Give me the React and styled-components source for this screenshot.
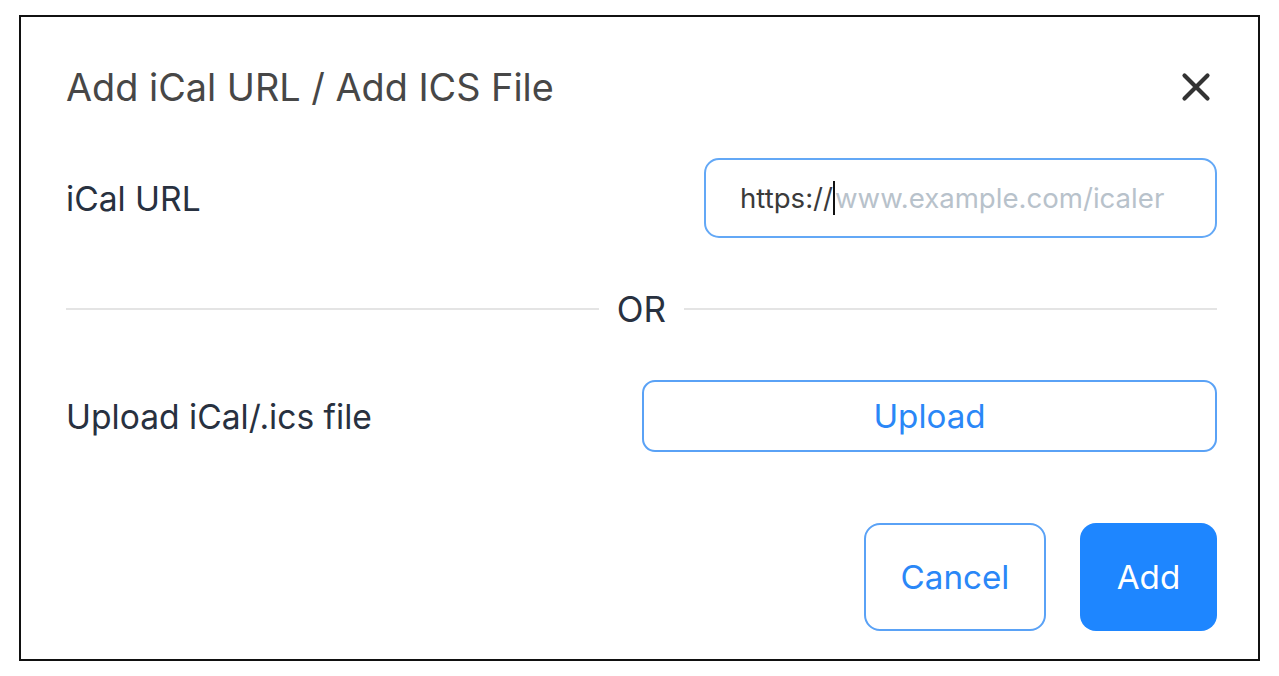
import React from "react";
import styled, { createGlobalStyle } from "styled-components";

const Global = createGlobalStyle`
  html, body { margin: 0; padding: 0; background: #ffffff; }
  body { font-family: Inter, "Liberation Sans", Arial, sans-serif; }
  * { box-sizing: border-box; }
`;

const Page = styled.div`
  padding: 15px 0 0 19px;
  width: 1279px;
  height: 676px;
`;

const Frame = styled.div`
  width: 1241px;
  height: 646px;
  border: 2px solid #111111;
  background: #ffffff;
  padding: 48px 41px 28px 45px;
  display: flex;
  flex-direction: column;
`;

const Header = styled.div`
  height: 44px;
  display: flex;
  align-items: center;
  justify-content: space-between;
`;

const Title = styled.h2`
  margin: 0;
  font-size: 37.8px;
  font-weight: 400;
  color: #474747;
  letter-spacing: 0;
`;

const CloseButton = styled.button`
  border: none;
  background: none;
  padding: 0;
  width: 32px;
  height: 32px;
  margin-right: 5px;
  display: flex;
  align-items: center;
  justify-content: center;
  cursor: pointer;
`;

const Row = styled.div`
  display: flex;
  align-items: center;
  justify-content: space-between;
  margin-top: ${(p) => p.$gap}px;
`;

const Label = styled.label`
  font-size: 33.6px;
  color: #283140;
`;

const FakeInput = styled.div`
  width: 513px;
  height: 80px;
  border: 2px solid #63a8f6;
  border-radius: 15px;
  padding: 0 34px;
  display: flex;
  align-items: center;
  font-size: 27.6px;
  white-space: nowrap;
  overflow: hidden;
`;

const Typed = styled.span`
  color: #3a3a3a;
`;

const Caret = styled.span`
  display: inline-block;
  width: 2px;
  height: 34px;
  background: #111111;
`;

const Placeholder = styled.span`
  color: #b8c2cb;
`;

const Divider = styled.div`
  margin-top: 51px;
  height: 40px;
  display: flex;
  align-items: center;
  gap: 18px;
`;

const Line = styled.div`
  flex: 1;
  height: 2px;
  background: #e4e4e4;
`;

const OrText = styled.span`
  font-size: 35px;
  color: #283140;
`;

const OutlineButton = styled.button`
  width: ${(p) => p.$w}px;
  height: ${(p) => p.$h}px;
  border: 2px solid #5aa2f6;
  border-radius: ${(p) => p.$r}px;
  background: #ffffff;
  color: #2a87f7;
  font-family: inherit;
  font-size: 33.2px;
  cursor: pointer;
`;

const PrimaryButton = styled.button`
  width: 137px;
  height: 108px;
  border: none;
  border-radius: 16px;
  background: #1e86ff;
  color: #ffffff;
  font-family: inherit;
  font-size: 33.2px;
  cursor: pointer;
`;

const Footer = styled.div`
  margin-top: 71px;
  display: flex;
  justify-content: flex-end;
  gap: 34px;
`;

export default function App() {
  return (
    <>
      <Global />
      <Page>
        <Frame>
          <Header>
            <Title>Add iCal URL / Add ICS File</Title>
            <CloseButton aria-label="Close">
              <svg width="30" height="30" viewBox="0 0 30 30">
                <path
                  d="M3.5 3.5 L26.5 26.5 M26.5 3.5 L3.5 26.5"
                  stroke="#333333"
                  strokeWidth="4.2"
                  strokeLinecap="round"
                />
              </svg>
            </CloseButton>
          </Header>
          <Row $gap={49}>
            <Label>iCal URL</Label>
            <FakeInput>
              <Typed>https://</Typed>
              <Caret />
              <Placeholder>www.example.com/icaler</Placeholder>
            </FakeInput>
          </Row>
          <Divider>
            <Line />
            <OrText>OR</OrText>
            <Line />
          </Divider>
          <Row $gap={51}>
            <Label>Upload iCal/.ics file</Label>
            <OutlineButton $w={575} $h={72} $r={13}>Upload</OutlineButton>
          </Row>
          <Footer>
            <OutlineButton $w={182} $h={108} $r={16}>Cancel</OutlineButton>
            <PrimaryButton>Add</PrimaryButton>
          </Footer>
        </Frame>
      </Page>
    </>
  );
}
